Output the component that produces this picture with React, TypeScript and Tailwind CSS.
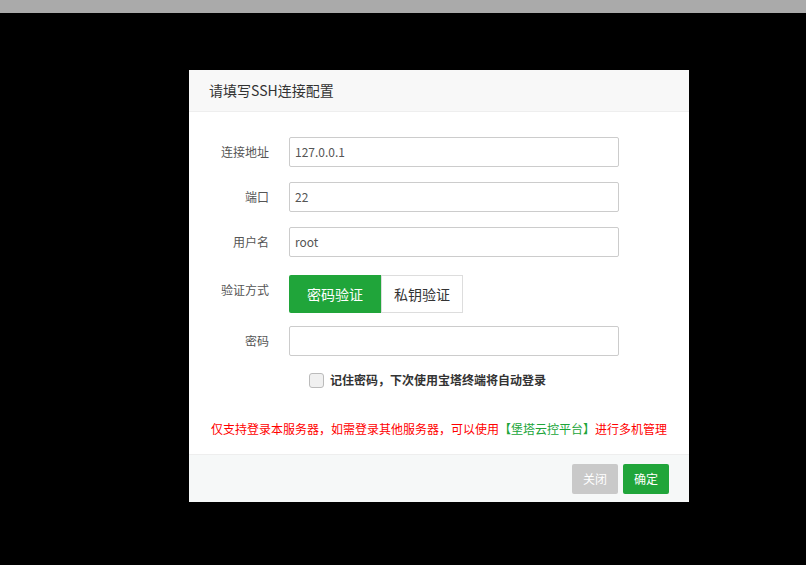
const font = { fontFamily: '"Noto Sans CJK SC", "Liberation Sans", sans-serif' };

function Row({ label, children, top = false }: { label: string; children: React.ReactNode; top?: boolean }) {
  return (
    <div className={`flex ${top ? 'items-start' : 'items-center'}`}>
      <div className={`w-[100px] pr-5 text-right text-[12px] text-[#555] ${top ? 'pt-[6px]' : ''}`}>{label}</div>
      <div>{children}</div>
    </div>
  );
}

function Input({ value = '' }: { value?: string }) {
  return (
    <div className="w-[330px] h-[30px] border border-[#ccc] rounded-[2px] px-[5px] flex items-center text-[12px] text-[#555]">
      {value}
    </div>
  );
}

export default function App() {
  return (
    <div className="w-[806px] h-[565px] bg-black flex flex-col" style={font}>
      <div className="h-[13px] bg-[#aaaaaa]" />
      <div className="flex pt-[57px] pl-[189px]">
        <div className="w-[500px] h-[432px] bg-white flex flex-col">
          <div className="h-[42px] bg-[#f8f8f8] border-b border-[#eee] flex items-center px-5 text-[14px] text-[#333]">
            请填写SSH连接配置
          </div>
          <div className="flex-1 pt-[25px] flex flex-col">
            <div className="flex flex-col gap-[15px]">
              <Row label="连接地址"><Input value="127.0.0.1" /></Row>
              <Row label="端口"><Input value="22" /></Row>
              <Row label="用户名"><Input value="root" /></Row>
            </div>
            <div className="mt-[18px]">
              <Row label="验证方式" top>
                <div className="flex h-[38px] text-[14px]">
                  <div className="w-[92px] bg-[#20a53a] text-white flex items-center justify-center rounded-l-[2px]">密码验证</div>
                  <div className="w-[82px] border border-[#ddd] text-[#333] flex items-center justify-center">私钥验证</div>
                </div>
              </Row>
            </div>
            <div className="mt-[13px]">
              <Row label="密码"><Input /></Row>
            </div>
            <div className="mt-[15px] pl-[120px] flex items-center gap-[6px]">
              <div className="w-[15px] h-[15px] border border-[#bbb] rounded-[3px] bg-[#f0f0f0]" />
              <span className="text-[12px] text-[#333] font-bold">记住密码，下次使用宝塔终端将自动登录</span>
            </div>
            <div className="mt-[31px] text-center text-[12px] text-[#ff0000]">
              仅支持登录本服务器，如需登录其他服务器，可以使用<span className="text-[#20a53a]">【堡塔云控平台】</span>进行多机管理
            </div>
          </div>
          <div className="h-[48px] bg-[#f6f8f8] border-t border-[#eee] flex items-center justify-end gap-[5px] pr-5">
            <div className="w-[46px] h-[30px] bg-[#c9c9c9] text-white text-[12px] rounded-[2px] flex items-center justify-center">关闭</div>
            <div className="w-[46px] h-[30px] bg-[#20a53a] text-white text-[12px] rounded-[2px] flex items-center justify-center">确定</div>
          </div>
        </div>
      </div>
    </div>
  );
}
